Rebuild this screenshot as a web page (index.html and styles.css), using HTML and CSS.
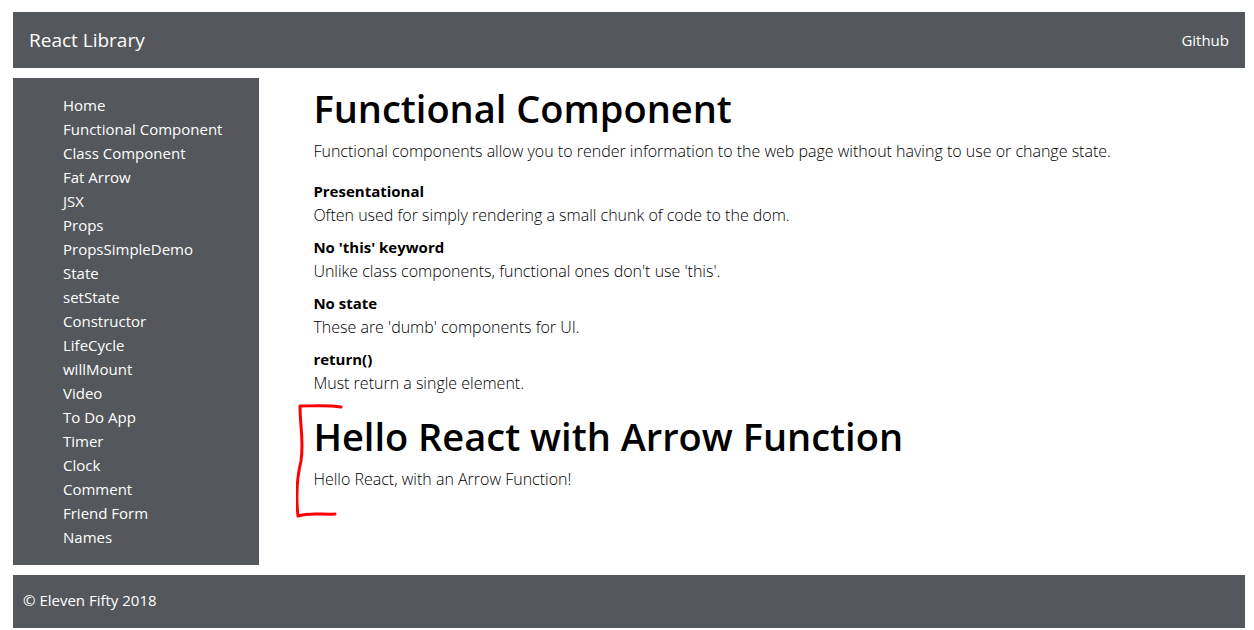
FILE: index.html
```html
<!DOCTYPE html>
<html lang="en">
<head>
<meta charset="utf-8">
<title>React Library</title>
<link rel="stylesheet" href="styles.css">
</head>
<body>
<header class="navbar">
  <a class="brand" href="#">React Library</a>
  <a class="nav-link" href="#">Github</a>
</header>
<div class="layout">
  <nav class="sidebar">
    <ul class="menu">
      <li><a href="#">Home</a></li>
      <li><a href="#">Functional Component</a></li>
      <li><a href="#">Class Component</a></li>
      <li><a href="#">Fat Arrow</a></li>
      <li><a href="#">JSX</a></li>
      <li><a href="#">Props</a></li>
      <li><a href="#">PropsSimpleDemo</a></li>
      <li><a href="#">State</a></li>
      <li><a href="#">setState</a></li>
      <li><a href="#">Constructor</a></li>
      <li><a href="#">LifeCycle</a></li>
      <li><a href="#">willMount</a></li>
      <li><a href="#">Video</a></li>
      <li><a href="#">To Do App</a></li>
      <li><a href="#">Timer</a></li>
      <li><a href="#">Clock</a></li>
      <li><a href="#">Comment</a></li>
      <li><a href="#">Friend Form</a></li>
      <li><a href="#">Names</a></li>
    </ul>
  </nav>
  <main class="content">
    <h1>Functional Component</h1>
    <p>Functional components allow you to render information to the web page without having to use or change state.</p>
    <dl class="facts">
      <dt>Presentational</dt>
      <dd>Often used for simply rendering a small chunk of code to the dom.</dd>
      <dt>No 'this' keyword</dt>
      <dd>Unlike class components, functional ones don't use 'this'.</dd>
      <dt>No state</dt>
      <dd>These are 'dumb' components for UI.</dd>
      <dt>return()</dt>
      <dd>Must return a single element.</dd>
    </dl>
    <section class="hello">
      <svg class="bracket" width="50" height="116" viewBox="0 0 50 116" aria-hidden="true"><path d="M45 4C33 2 18 3 4 3C4 23 8 38 5 58C0 78 0 94 2 113C14 109 27 112 39 111"/></svg>
      <h1>Hello React with Arrow Function</h1>
      <p>Hello React, with an Arrow Function!</p>
    </section>
  </main>
</div>
<footer class="footer">© Eleven Fifty 2018</footer>
</body>
</html>
```
FILE: styles.css
```css
* {
  box-sizing: border-box;
}

body {
  margin: 0;
  padding: 12px 9px 2px 13px;
  font-family: "Segoe UI", "Open Sans", "Noto Sans", sans-serif;
  font-size: 15px;
  line-height: 24px;
  color: #000;
  background: #fff;
}

a {
  color: #fff;
  text-decoration: none;
}

.navbar {
  display: flex;
  align-items: center;
  justify-content: space-between;
  padding: 8px 16px;
  background: #54575b;
}

.brand {
  font-size: 19px;
  line-height: 40px;
}

.layout {
  display: flex;
  gap: 54px;
  margin: 10px 0;
}

.sidebar {
  flex: 0 0 20%;
  padding: 15px 10px 16px;
  background: #54575b;
}

.menu {
  margin: 0;
  padding: 0 0 0 40px;
  list-style: none;
}

.content {
  flex: 1;
  padding-top: 6px;
}

h1 {
  margin: 0 0 7px;
  font-size: 38px;
  font-weight: 600;
  line-height: 48px;
}

p {
  margin: 0 0 16px;
}

.content p,
dd {
  font-size: 16px;
  font-weight: 300;
}

.facts {
  margin: 0 0 17px;
}

dt {
  font-weight: 700;
}

dd {
  margin: 0 0 8px;
}

.hello {
  position: relative;
}

.bracket {
  position: absolute;
  top: -9px;
  left: -17px;
  fill: none;
  stroke: #ff0000;
  stroke-width: 3;
  stroke-linecap: round;
  stroke-linejoin: round;
}

.footer {
  padding: 13px 10px 16px;
  color: #fff;
  background: #54575b;
}
```
